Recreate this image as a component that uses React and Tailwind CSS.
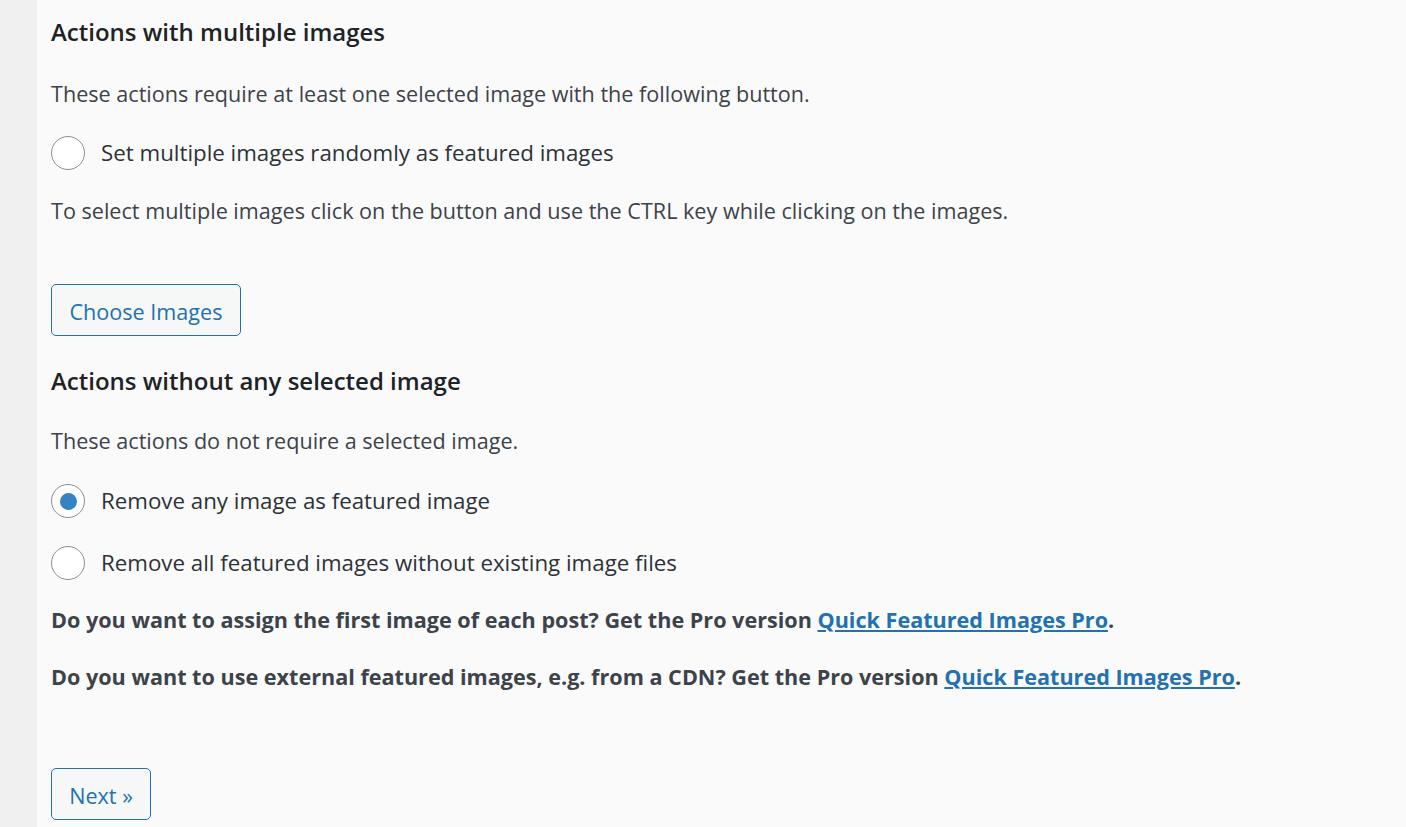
import React, { useState } from 'react';

const font = { fontFamily: '"Segoe UI", "Open Sans", "Noto Sans", sans-serif' };

const Radio = ({ checked, onChange, label }) => (
  <label className="flex items-center gap-[16px] h-[34px] cursor-pointer">
    <span className="w-[34px] h-[34px] rounded-full border border-[#8c8f94] bg-white flex items-center justify-center shrink-0">
      {checked && <span className="w-[17px] h-[17px] rounded-full bg-[#3582c4]" />}
    </span>
    <input type="radio" className="hidden" checked={checked} onChange={onChange} />
    <span className="text-[22.3px] leading-[30px] font-medium text-[#2c3338]">{label}</span>
  </label>
);

const App = () => {
  const [choice, setChoice] = useState('remove_any');

  return (
    <div className="min-h-screen flex bg-[#fafafa]" style={font}>
      <div className="w-[37px] shrink-0 bg-[#f0f0f1]" />
      <div className="flex-1 pl-[14px] pt-[17px] pb-[7px] text-[#3c434a]">
        <h2 className="text-[24px] leading-[30px] font-semibold text-[#1d2327]">Actions with multiple images</h2>
        <p className="mt-[32px] text-[21.6px] leading-[30px]">These actions require at least one selected image with the following button.</p>
        <div className="mt-[27px]">
          <Radio checked={choice === 'random'} onChange={() => setChoice('random')} label="Set multiple images randomly as featured images" />
        </div>
        <p className="mt-[26px] text-[21.6px] leading-[30px]">To select multiple images click on the button and use the CTRL key while clicking on the images.</p>
        <button className="mt-[58px] w-[190px] h-[52px] rounded-[5px] border border-[#2271b1] bg-[#f6f7f7] text-[#2271b1] text-[21.6px] leading-[30px] pt-[3px]">
          Choose Images
        </button>
        <h2 className="mt-[30px] text-[24px] leading-[30px] font-semibold text-[#1d2327]">Actions without any selected image</h2>
        <p className="mt-[30px] text-[21.6px] leading-[30px]">These actions do not require a selected image.</p>
        <div className="mt-[28px]">
          <Radio checked={choice === 'remove_any'} onChange={() => setChoice('remove_any')} label="Remove any image as featured image" />
        </div>
        <div className="mt-[28px]">
          <Radio checked={choice === 'remove_orphans'} onChange={() => setChoice('remove_orphans')} label="Remove all featured images without existing image files" />
        </div>
        <p className="mt-[25px] text-[21.6px] leading-[30px] font-bold">
          Do you want to assign the first image of each post? Get the Pro version{' '}
          <a href="#" className="text-[#2271b1] underline">Quick Featured Images Pro</a>.
        </p>
        <p className="mt-[27px] text-[21.6px] leading-[30px] font-bold">
          Do you want to use external featured images, e.g. from a CDN? Get the Pro version{' '}
          <a href="#" className="text-[#2271b1] underline">Quick Featured Images Pro</a>.
        </p>
        <button className="mt-[76px] w-[100px] h-[52px] rounded-[5px] border border-[#2271b1] bg-[#f6f7f7] text-[#2271b1] text-[21.6px] leading-[30px] pt-[3px]">
          Next »
        </button>
      </div>
    </div>
  );
};

export default App;
